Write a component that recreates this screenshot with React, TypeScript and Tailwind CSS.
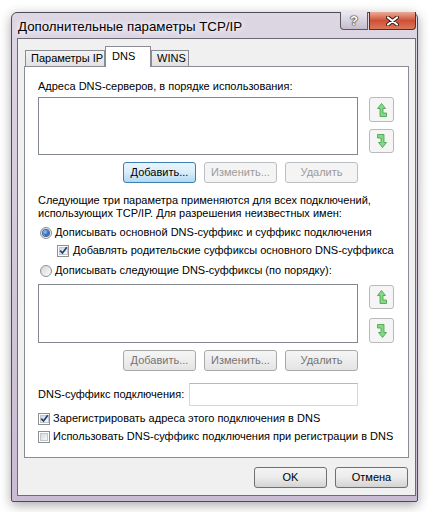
import type { ReactNode } from 'react'

type Kind = 'normal' | 'focus' | 'off' | 'off2'

const btnKind: Record<Kind, string> = {
  normal: 'border-[#707070] bg-gradient-to-b from-[#f4f4f4] via-[#ebebeb] to-[#d3d3d3] text-black',
  focus: 'border-[#3c7fb1] bg-gradient-to-b from-[#eaf5fc] via-[#d8edfa] to-[#b0d8f2] text-black',
  off: 'border-[#bcbfc2] bg-[#f4f4f4] text-[#9b9b9b]',
  off2: 'border-[#a9a9a9] bg-gradient-to-b from-[#f6f6f6] to-[#e4e4e4] text-[#747474]',
}

function Btn({ children, kind }: { children: ReactNode; kind: Kind }) {
  return (
    <div className={`w-[73px] h-[21px] rounded-[3px] border flex items-center justify-center ${btnKind[kind]}`}>
      {children}
    </div>
  )
}

function ArrowBtn({ dir, tall }: { dir: 'up' | 'down'; tall?: boolean }) {
  return (
    <div className={`w-[25px] ${tall ? 'h-[25px]' : 'h-[24px]'} rounded-[3px] border border-[#bababa] bg-[#f5f5f5] flex items-center justify-center`}>
      <svg width="10" height="14" viewBox="0 0 10 14">
        {dir === 'up' ? (
          <polygon points="4.5,0.5 8.5,5.5 6,5.5 6,10 9.5,10 9.5,13.5 3,13.5 3,5.5 0.5,5.5" fill="#86d886" stroke="#3f9f46" strokeWidth="0.8" />
        ) : (
          <polygon points="0.5,0.5 7,0.5 7,8.5 9.5,8.5 5.5,13.5 1.5,8.5 4,8.5 4,4 0.5,4" fill="#86d886" stroke="#3f9f46" strokeWidth="0.8" />
        )}
      </svg>
    </div>
  )
}

function Check({ on }: { on?: boolean }) {
  return (
    <span className="w-[12px] h-[12px] shrink-0 border border-[#8f8f8f] bg-white p-[1px] flex">
      <span className="flex-1 border border-[#c3c7cc] bg-gradient-to-br from-[#d4d9df] to-[#f8f9fa] flex items-center justify-center">
        {on && (
          <svg width="9" height="9" viewBox="0 0 9 9" className="-m-[1px]">
            <path d="M1.2 4.6 L3.5 7 L7.8 1.3" fill="none" stroke="#223f7a" strokeWidth="1.7" />
          </svg>
        )}
      </span>
    </span>
  )
}

function Radio({ on }: { on?: boolean }) {
  return (
    <span className="w-[12px] h-[12px] shrink-0 rounded-full border border-[#8f8f8f] bg-gradient-to-br from-[#d3d8de] to-[#fafafa] flex items-center justify-center">
      {on && (
        <span className="w-[6px] h-[6px] rounded-full bg-[radial-gradient(circle_at_35%_35%,#9cc8f5,#2d66b8_60%,#123a7a)] shadow-[0_0_0_1px_#3a6aa8]" />
      )}
    </span>
  )
}

function Tab({ children, sel, w }: { children: ReactNode; sel?: boolean; w: string }) {
  return sel ? (
    <div className={`${w} h-[21px] -mb-px relative z-10 border border-b-0 border-[#898c95] bg-white pl-[6px] pt-[2px] leading-[15px]`}>
      {children}
    </div>
  ) : (
    <div className={`${w} h-[16px] border border-b-0 border-[#898c95] bg-gradient-to-b from-[#f2f2f2] to-[#e1e1e1] pl-[5px] leading-[15px]`}>
      {children}
    </div>
  )
}

export default function App() {
  return (
    <div className="w-[429px] h-[512px] bg-white overflow-hidden whitespace-nowrap pl-[11px] pt-[12px] font-[family-name:'Liberation_Sans',Arial,sans-serif] text-[11px] leading-[15px] text-black">
      <div className="w-[407px] h-[490px] flex flex-col rounded-t-[6px] rounded-b-[2px] border border-[#4f4b55] bg-gradient-to-b from-[#ddd6e3] via-[#d2c8da] to-[#c9bbd3] shadow-[0_3px_12px_rgba(0,0,0,0.35)]">
        <div className="h-[25px] flex items-start shrink-0">
          <span className="pl-[6px] pt-[6px] text-[13.3px] leading-[16px] [text-shadow:0_0_6px_#fff,0_0_6px_#fff]">
            Дополнительные параметры TCP/IP
          </span>
          <div className="ml-auto mr-px -mt-px flex gap-px">
            <div className="w-[28px] h-[18px] rounded-bl-[4px] border border-t-0 border-[#5b5862] bg-gradient-to-b from-[#ece8f0] via-[#d9d3df] to-[#c4bccd] flex items-center justify-center">
              <span className="font-bold text-[13px] leading-[13px] text-white [text-shadow:0_0_1px_#222,0_0_1px_#222,0_0_2px_#444]">?</span>
            </div>
            <div className="w-[47px] h-[18px] rounded-br-[4px] border border-t-0 border-[#5e2a21] bg-gradient-to-b from-[#e9ab98] via-[#cf4f36] to-[#d9775a] flex items-center justify-center">
              <svg width="13" height="10" viewBox="0 0 13 10">
                <path d="M2 1.5 L11 8.5 M11 1.5 L2 8.5" stroke="#3b1a14" strokeWidth="4" strokeLinecap="round" />
                <path d="M2 1.5 L11 8.5 M11 1.5 L2 8.5" stroke="#fff" strokeWidth="2.2" strokeLinecap="round" />
              </svg>
            </div>
          </div>
        </div>

        <div className="ml-[5px] mr-px mb-[5px] flex-1 border border-[#6f6b75] bg-[#f0f0f0] flex flex-col pl-[6px] pr-[6px] pt-[7px]">
          <div className="h-[20px] flex items-end pl-px shrink-0">
            <Tab w="w-[80px]">Параметры IP</Tab>
            <Tab w="w-[46px]" sel>DNS</Tab>
            <Tab w="w-[38px]">WINS</Tab>
          </div>

          <div className="h-[392px] border border-[#898c95] bg-white pl-[13px] pt-[12px] flex flex-col">
            <div>Адреса DNS-серверов, в порядке использования:</div>
            <div className="mt-[3px] flex items-start">
              <div className="w-[320px] h-[58px] border border-[#828790] bg-white" />
              <div className="ml-[11px] flex flex-col gap-[7px]">
                <ArrowBtn dir="up" tall />
                <ArrowBtn dir="down" />
              </div>
            </div>
            <div className="mt-[7px] w-[320px] flex justify-end gap-[8px]">
              <Btn kind="focus">Добавить...</Btn>
              <Btn kind="off">Изменить...</Btn>
              <Btn kind="off">Удалить</Btn>
            </div>

            <div className="mt-[11px] leading-[13px]">
              Следующие три параметра применяются для всех подключений,
              <br />
              использующих TCP/IP. Для разрешения неизвестных имен:
            </div>
            <div className="mt-[5px] flex items-center gap-[3px] pl-[2px]">
              <Radio on />
              <span>Дописывать основной DNS-суффикс и суффикс подключения</span>
            </div>
            <div className="mt-[3px] flex items-center gap-[4px] pl-[19px]">
              <Check on />
              <span>Добавлять родительские суффиксы основного DNS-суффикса</span>
            </div>
            <div className="mt-[5px] flex items-center gap-[3px] pl-[2px]">
              <Radio />
              <span>Дописывать следующие DNS-суффиксы (по порядку):</span>
            </div>
            <div className="mt-[6px] flex items-start">
              <div className="w-[320px] h-[59px] border border-[#828790] bg-white" />
              <div className="ml-[11px] mt-px flex flex-col gap-[9px]">
                <ArrowBtn dir="up" />
                <ArrowBtn dir="down" tall />
              </div>
            </div>
            <div className="mt-[7px] w-[320px] flex justify-end gap-[8px]">
              <Btn kind="off2">Добавить...</Btn>
              <Btn kind="off2">Изменить...</Btn>
              <Btn kind="off2">Удалить</Btn>
            </div>

            <div className="mt-[12px] flex items-center">
              <span className="w-[151px]">DNS-суффикс подключения:</span>
              <div className="w-[169px] h-[23px] border border-[#d5d9df] border-t-[#b5b9bf] bg-white" />
            </div>
            <div className="mt-[5px] flex items-center gap-[3px]">
              <Check on />
              <span>Зарегистрировать адреса этого подключения в DNS</span>
            </div>
            <div className="mt-[3px] flex items-center gap-[3px]">
              <Check />
              <span>Использовать DNS-суффикс подключения при регистрации в DNS</span>
            </div>
          </div>

          <div className="mt-[9px] flex justify-end gap-[8px] pr-px">
            <Btn kind="normal">OK</Btn>
            <Btn kind="normal">Отмена</Btn>
          </div>
        </div>
      </div>
    </div>
  )
}
